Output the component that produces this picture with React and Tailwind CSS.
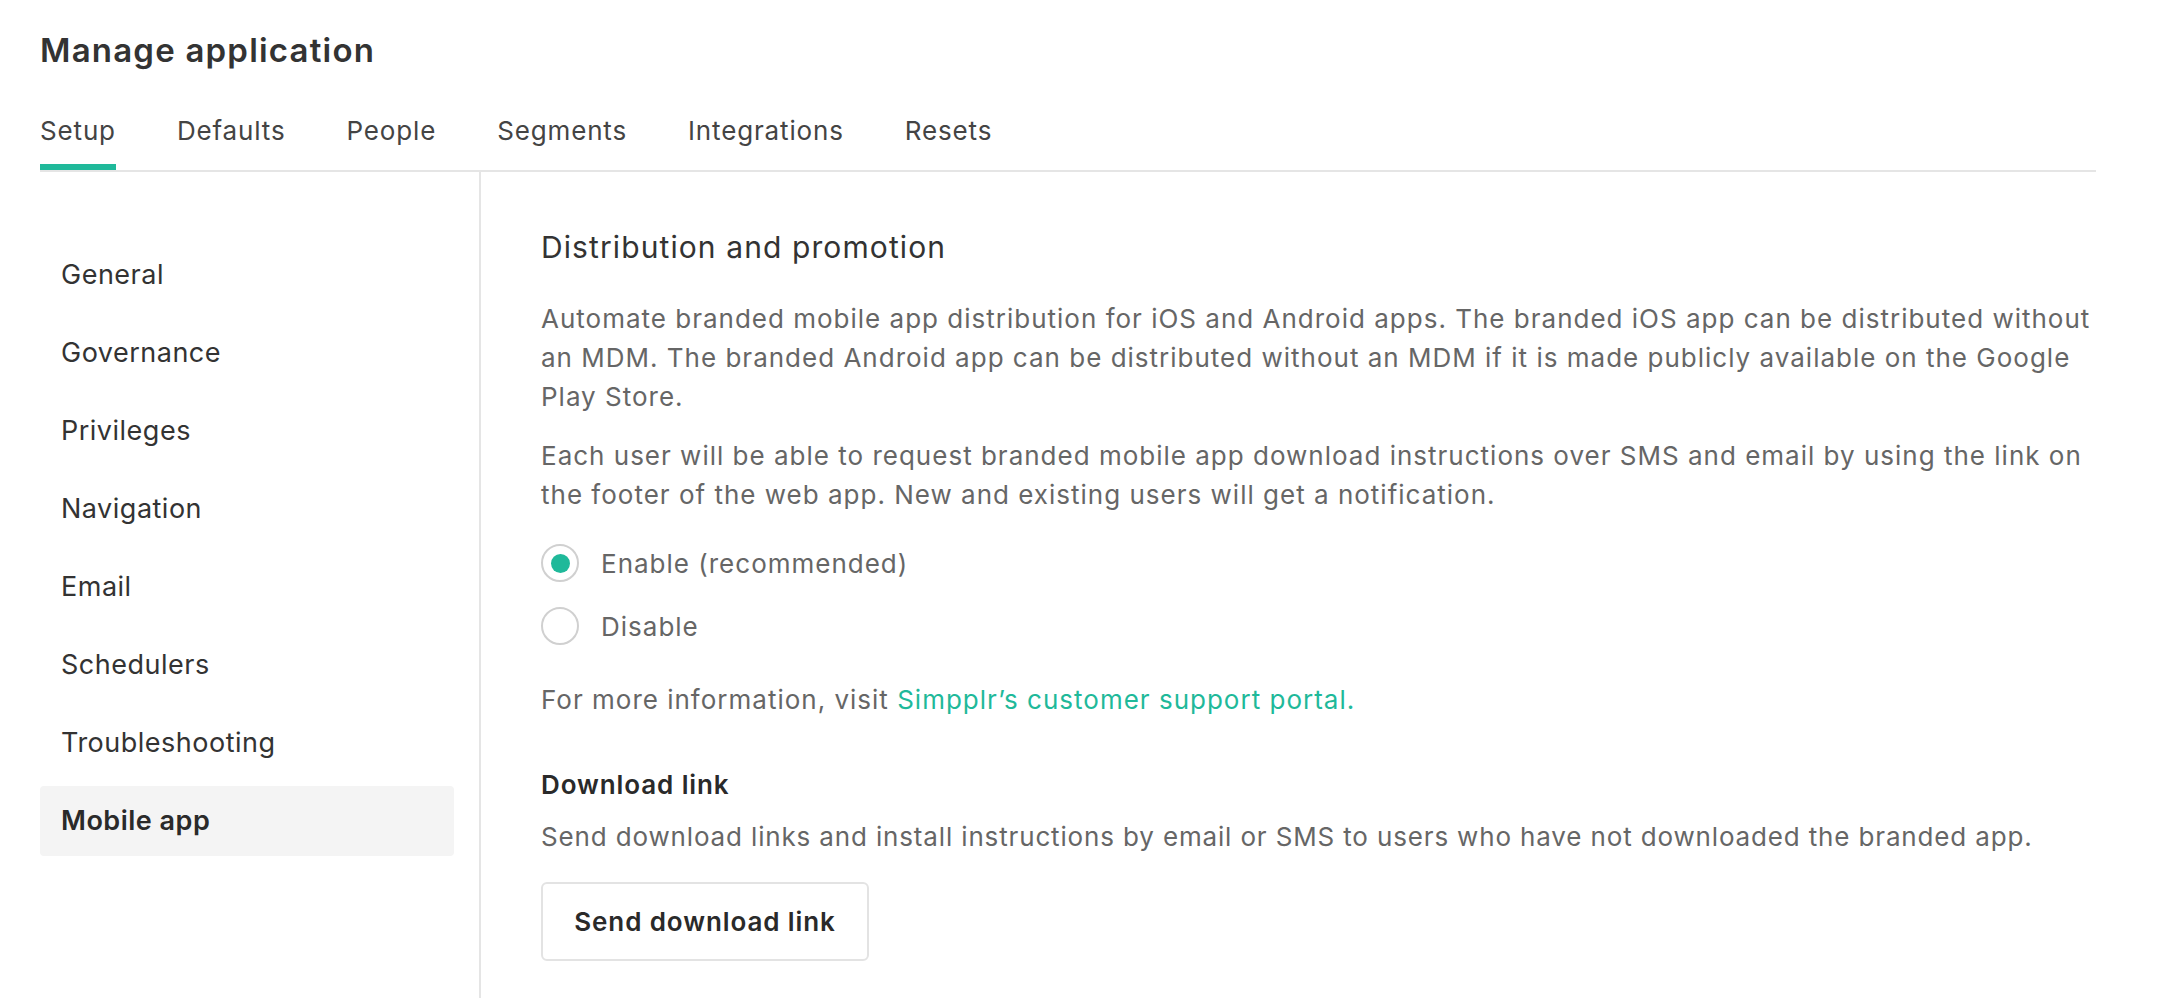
import React from "react";

const tabs = ["Setup", "Defaults", "People", "Segments", "Integrations", "Resets"];
const side = ["General", "Governance", "Privileges", "Navigation", "Email", "Schedulers", "Troubleshooting", "Mobile app"];

export default function App() {
  return (
    <div className="w-[2168px] h-[998px] bg-white overflow-hidden px-[40px] text-[#333]" style={{ fontFamily: "Inter, 'Open Sans', sans-serif" }}>
      <div className="w-[2056px] flex flex-col h-full">
        <h1 className="pt-[28px] text-[33px] leading-[44px] font-semibold tracking-[1.2px] text-[#333]">Manage application</h1>
        <div className="mt-[41px] flex gap-[61px] border-b-2 border-[#e5e5e5]">
          {tabs.map((t, i) => (
            <div key={t} className="flex flex-col">
              <span className="text-[26px] leading-[36px] tracking-[0.85px] text-[#444]">{t}</span>
              <div className={"mt-[15px] h-[6px] " + (i === 0 ? "bg-[#1fb99a]" : "bg-transparent")} />
            </div>
          ))}
        </div>
        <div className="flex flex-1">
          <div className="w-[441px] border-r-2 border-[#e5e5e5] pt-[68px] flex flex-col gap-[8px]">
            {side.map((s) => (
              <div
                key={s}
                className={
                  "w-[414px] h-[70px] px-[21px] flex items-center rounded-[4px] text-[27px] tracking-[0.5px] " +
                  (s === "Mobile app" ? "bg-[#f4f4f4] font-semibold text-[#2a2a2a]" : "text-[#333]")
                }
              >
                {s}
              </div>
            ))}
          </div>
          <div className="flex-1 pl-[60px] pt-[55px] flex flex-col text-[26px] tracking-[1px]">
            <h2 className="text-[30px] leading-[40px] tracking-[1.1px] text-[#333]">Distribution and promotion</h2>
            <p className="mt-[32px] leading-[39px] text-[#666]">
              Automate branded mobile app distribution for iOS and Android apps. The branded iOS app can be distributed without an MDM. The branded Android app can be distributed without an MDM if it is made publicly available on the Google Play Store.
            </p>
            <p className="mt-[20px] leading-[39px] text-[#666]">
              Each user will be able to request branded mobile app download instructions over SMS and email by using the link on the footer of the web app. New and existing users will get a notification.
            </p>
            <div className="mt-[27px] flex flex-col gap-[19px]">
              <label className="h-[44px] flex items-center gap-[22px] text-[#666]">
                <span className="w-[38px] h-[38px] rounded-full border-2 border-[#d0d0d0] flex items-center justify-center">
                  <span className="w-[19px] h-[19px] rounded-full bg-[#1fb99a]" />
                </span>
                Enable (recommended)
              </label>
              <label className="h-[44px] flex items-center gap-[22px] text-[#666]">
                <span className="w-[38px] h-[38px] rounded-full border-2 border-[#d0d0d0]" />
                Disable
              </label>
            </div>
            <p className="mt-[32px] leading-[39px] text-[#666]">
              For more information, visit <a className="text-[#1fb99a]">Simpplr’s customer support portal.</a>
            </p>
            <h3 className="mt-[46px] leading-[39px] font-semibold tracking-[0.9px] text-[#2a2a2a]">Download link</h3>
            <p className="mt-[13px] leading-[39px] tracking-[0.85px] text-[#666]">
              Send download links and install instructions by email or SMS to users who have not downloaded the branded app.
            </p>
            <div className="mt-[26px]">
              <button className="w-[328px] h-[79px] border-2 border-[#e3e3e3] rounded-[6px] font-semibold tracking-[0.9px] text-[#2a2a2a] bg-white">
                Send download link
              </button>
            </div>
          </div>
        </div>
      </div>
    </div>
  );
}
